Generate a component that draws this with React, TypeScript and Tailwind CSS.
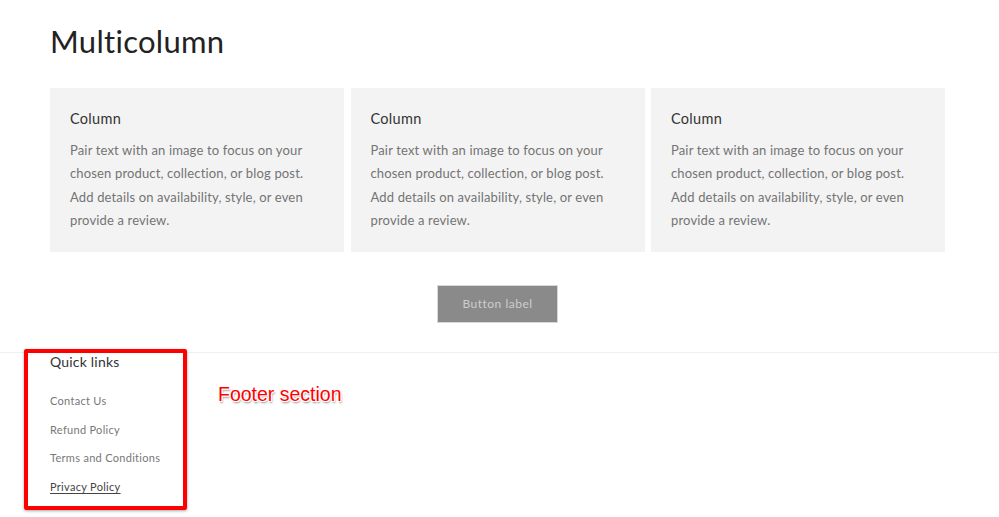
export default function App() {
  const cols = [1, 2, 3];
  const links = ["Contact Us", "Refund Policy", "Terms and Conditions"];
  return (
    <div className="relative w-[999px] h-[517px] overflow-hidden bg-white font-['Lato',sans-serif]">
      <div className="pl-[50px] pr-[54px] pt-[21px]">
        <h1 className="text-[31px] leading-[40px] text-[#222] tracking-[0.3px]">Multicolumn</h1>
        <div className="grid grid-cols-3 gap-[6.5px] mt-[27px]">
          {cols.map((c) => (
            <div key={c} className="bg-[#f3f3f3] h-[164px] px-[20px] pt-[22px]">
              <h3 className="text-[14.5px] leading-[18px] text-[#333] tracking-[0.3px]">Column</h3>
              <p className="mt-[11px] text-[13px] leading-[23.3px] text-[#747474] tracking-[0.15px]">
                Pair text with an image to focus on your chosen product, collection, or blog post.
                Add details on availability, style, or even provide a review.
              </p>
            </div>
          ))}
        </div>
        <div className="flex justify-center mt-[33px]">
          <button className="w-[121px] h-[38px] bg-[#8a8a8a] border border-[#d8d8d8] text-[12px] text-[#cdcdcd] tracking-[0.5px]">
            Button label
          </button>
        </div>
      </div>
      <div className="mt-[29px] border-t border-[#efefef] px-[50px]">
        <h4 className="text-[14px] leading-[18px] text-[#333] tracking-[0.2px]">Quick links</h4>
        <ul className="mt-[21px] flex flex-col gap-[10.7px]">
          {links.map((l) => (
            <li key={l} className="text-[11px] leading-[18px] text-[#777] tracking-[0.3px]">{l}</li>
          ))}
          <li className="text-[11px] leading-[18px] text-[#444] tracking-[0.3px] underline underline-offset-2">
            Privacy Policy
          </li>
        </ul>
      </div>
      <div className="absolute left-[24px] top-[349px] w-[163px] h-[161px] border-[4px] border-[#ff0000] rounded-[2px] shadow-[0_1px_3px_rgba(0,0,0,0.35)]" />
      <div className="absolute left-[218px] top-[383px] font-['Liberation_Sans',sans-serif] text-[19.5px] leading-[22px] text-[#ff0000] [text-shadow:1px_1px_0_#fff,-1px_-1px_0_#fff,1px_-1px_0_#fff,-1px_1px_0_#fff,1px_2px_2px_rgba(0,0,0,0.5)]">
        Footer section
      </div>
    </div>
  );
}
